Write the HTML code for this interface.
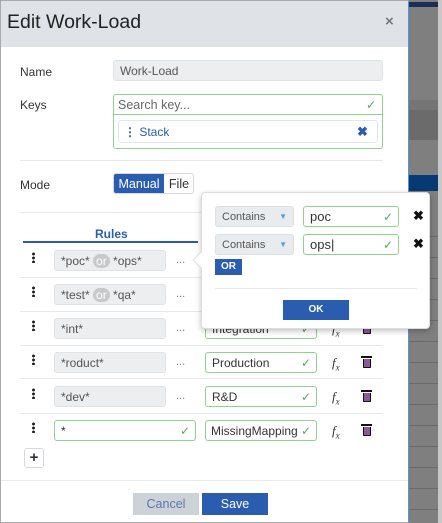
<!DOCTYPE html>
<html><head><style>
*{box-sizing:border-box;margin:0;padding:0}
body{width:442px;height:523px;position:relative;overflow:hidden;background:#fff;font-family:"Liberation Sans",sans-serif;font-size:12px;color:#333}
.a{position:absolute}
.inp{position:absolute;border-radius:3px;height:21px;line-height:20px;padding-left:6px;font-size:12px}
.g{background:#eceeef;border:1px solid #e0e3e6;color:#555}
.gr{background:#fff;border:1.5px solid #8fd18f;color:#333}
.ck{position:absolute;right:5px;top:0;color:#4caf50;font-size:12px}
.div{position:absolute;left:20px;width:363px;height:1px;background:#e6e8ea}
.keb{position:absolute;left:32px;width:3px;height:11px;background:radial-gradient(circle,#222 1.3px,transparent 1.6px) 0 0/3px 4px repeat-y}
.dots{position:absolute;left:176px;color:#777;font-size:11px}
.fx{position:absolute;left:332px;font-style:italic;font-family:"Liberation Serif",serif;font-size:13px;color:#333}
.tr{position:absolute;left:363px;width:8px;height:9px;border:1.5px solid #111;border-top:none;background:#8a5a9a;border-radius:0 0 1px 1px}
.tr:before{content:"";position:absolute;left:-3px;top:-3px;width:11px;height:2px;background:#111}
.orb{display:inline-block;background:#c9c9c9;color:#fff;border-radius:8px;padding:0 3px;line-height:14px}
</style></head><body>
<div class="a" style="left:408px;top:0;width:34px;height:523px;background:#7f7f7f"></div>
<div class="a" style="left:409px;top:2px;width:29px;height:5px;background:#1d2d55"></div>
<div class="a" style="left:409px;top:100px;width:29px;height:10px;background:#757575"></div>
<div class="a" style="left:409px;top:110px;width:29px;height:30px;background:#6b6b6b"></div>
<div class="a" style="left:409px;top:175px;width:29px;height:16px;background:#053a72"></div>
<div class="a" style="left:438px;top:0;width:4px;height:523px;background:#c8c8c8"></div>
<div class="a" style="left:409px;top:216px;width:29px;height:300px;background:repeating-linear-gradient(#7f7f7f 0 20px,#6a6a6a 20px 21px)"></div>
<div class="a" style="left:0;top:0;width:409px;height:523px;border:1px solid #aaa;border-right:1px solid #5b8fd6;background:#fff"></div>
<div class="a" style="left:1px;top:1px;width:407px;height:46px;background:#dfe3e8"></div>
<div class="a" style="left:7px;top:11px;font-size:19.5px;color:#222">Edit Work-Load</div>
<div class="a" style="left:385px;top:13px;font-size:15px;color:#777;font-weight:bold">×</div>
<div class="a" style="left:20px;top:65px;font-size:12px">Name</div>
<div class="inp g" style="left:113px;top:60px;width:270px">Work-Load</div>
<div class="a" style="left:20px;top:98px">Keys</div>
<div class="a" style="left:113px;top:94px;width:270px;height:55px;border:1.5px solid #8fd18f;border-radius:3px"></div>
<div class="a" style="left:113px;top:114px;width:270px;height:1px;background:#8fd18f"></div>
<div class="a" style="left:118px;top:98px;font-size:12.5px;color:#666">Search key...</div>
<div class="a" style="left:366px;top:98px;color:#4caf50">✓</div>
<div class="a" style="left:118px;top:120px;width:260px;height:23px;border:1px solid #e3e6e9;border-radius:3px"></div>
<div class="a" style="left:124px;top:125px;color:#2a5db0;font-size:12px"><b>⋮</b> Stack</div>
<div class="a" style="left:357px;top:124px;color:#2a5db0;font-size:13px;font-weight:bold">✖</div>
<div class="div" style="top:160px"></div>
<div class="a" style="left:20px;top:178px">Mode</div>
<div class="a" style="left:113px;top:173px;width:81px;height:21px;border:1px solid #d5d9dd;border-radius:3px;overflow:hidden">
<div class="a" style="left:0;top:0;width:50px;height:21px;background:#2a5db0;color:#fff;text-align:center;line-height:20px;font-size:12.5px">Manual</div>
<div class="a" style="left:50px;top:0;width:30px;height:21px;text-align:center;line-height:20px;font-size:12.5px">File</div></div>
<div class="div" style="top:212px"></div>
<div class="a" style="left:95px;top:227px;color:#2a5db0;font-weight:bold;font-size:12px">Rules</div>
<div class="a" style="left:23px;top:241px;width:175px;height:2px;background:#2a5db0"></div>
<div class="div" style="top:277px"></div><div class="div" style="top:311px"></div><div class="div" style="top:345px"></div><div class="div" style="top:378px"></div><div class="div" style="top:413px"></div>
<div class="keb" style="top:252px"></div>
<div class="inp g" style="left:54px;top:250px;width:112px">*poc* <span class="orb">or</span> *ops*</div>
<div class="dots" style="top:254px">...</div>
<div class="keb" style="top:286px"></div>
<div class="inp g" style="left:54px;top:284px;width:112px">*test* <span class="orb">or</span> *qa*</div>
<div class="dots" style="top:288px">...</div>
<div class="keb" style="top:320px"></div>
<div class="inp g" style="left:54px;top:318px;width:112px">*int*</div>
<div class="dots" style="top:322px">...</div>
<div class="inp gr" style="left:205px;top:318px;width:112px">Integration<span class="ck">✓</span></div>
<div class="fx" style="top:321px">f<sub style="font-size:9px">x</sub></div><div class="tr" style="top:325px"></div>
<div class="keb" style="top:354px"></div>
<div class="inp g" style="left:54px;top:352px;width:112px">*roduct*</div>
<div class="dots" style="top:356px">...</div>
<div class="inp gr" style="left:205px;top:352px;width:112px">Production<span class="ck">✓</span></div>
<div class="fx" style="top:355px">f<sub style="font-size:9px">x</sub></div><div class="tr" style="top:359px"></div>
<div class="keb" style="top:388px"></div>
<div class="inp g" style="left:54px;top:386px;width:112px">*dev*</div>
<div class="dots" style="top:390px">...</div>
<div class="inp gr" style="left:205px;top:386px;width:112px">R&amp;D<span class="ck">✓</span></div>
<div class="fx" style="top:389px">f<sub style="font-size:9px">x</sub></div><div class="tr" style="top:393px"></div>
<div class="keb" style="top:422px"></div>
<div class="inp gr" style="left:54px;top:420px;width:142px">*<span class="ck">✓</span></div>
<div class="inp gr" style="left:205px;top:420px;width:112px;padding-left:5px">MissingMapping<span class="ck">✓</span></div>
<div class="fx" style="top:423px">f<sub style="font-size:9px">x</sub></div><div class="tr" style="top:427px"></div>
<div class="a" style="left:24px;top:448px;width:20px;height:20px;border:1px solid #d5d9dd;border-radius:3px;text-align:center;line-height:18px;font-weight:bold;font-size:15px">+</div>
<div class="a" style="left:1px;top:480px;width:407px;height:1px;background:#e8eaec"></div>
<div class="a" style="left:133px;top:493px;width:66px;height:22px;background:#ccd2d8;color:#5a7aa8;text-align:center;line-height:22px;font-size:12.5px">Cancel</div>
<div class="a" style="left:202px;top:493px;width:66px;height:22px;background:#2a5db0;color:#fff;text-align:center;line-height:22px;font-size:12.5px">Save</div>
<div class="a" style="left:201px;top:192px;width:229px;height:137px;background:#fff;border:1px solid #ddd;border-radius:4px;box-shadow:0 2px 6px rgba(0,0,0,.25)"></div>
<div class="a" style="left:195px;top:254px;width:12px;height:12px;background:#fff;transform:rotate(45deg);border-left:1px solid #ddd;border-bottom:1px solid #ddd"></div>
<div class="inp" style="left:215px;top:206px;width:79px;background:#e9ecef;border:1px solid #dde0e3;color:#555;font-size:11px">Contains<span class="a" style="right:6px;color:#5b9bd5;font-size:8px">▼</span></div>
<div class="inp gr" style="left:303px;top:206px;width:96px;font-size:13px">poc<span class="ck">✓</span></div>
<div class="a" style="left:413px;top:208px;font-size:13px;font-weight:bold;color:#111">✖</div>
<div class="inp" style="left:215px;top:234px;width:79px;background:#e9ecef;border:1px solid #dde0e3;color:#555;font-size:11px">Contains<span class="a" style="right:6px;color:#5b9bd5;font-size:8px">▼</span></div>
<div class="inp gr" style="left:303px;top:234px;width:96px;font-size:13px">ops|<span class="ck">✓</span></div>
<div class="a" style="left:413px;top:236px;font-size:13px;font-weight:bold;color:#111">✖</div>
<div class="a" style="left:215px;top:259px;width:27px;height:16px;background:#2a5db0;color:#fff;font-weight:bold;font-size:10px;text-align:center;line-height:16px">OR</div>
<div class="a" style="left:215px;top:288px;width:202px;height:1px;background:#e6e8ea"></div>
<div class="a" style="left:283px;top:300px;width:66px;height:20px;background:#2a5db0;color:#fff;font-weight:bold;font-size:10px;text-align:center;line-height:20px">OK</div>
</body></html>
